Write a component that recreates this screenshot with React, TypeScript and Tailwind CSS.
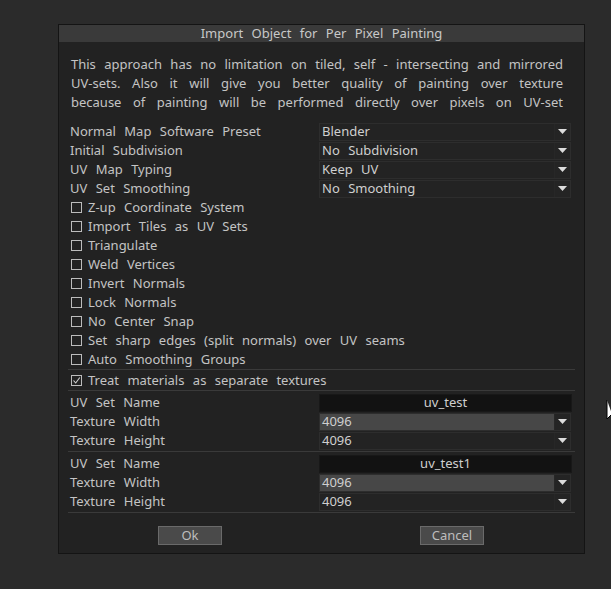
import React from "react";

const font = { fontFamily: '"Noto Sans", "DejaVu Sans", sans-serif' };

const Arrow = () => (
  <svg width="9" height="5" viewBox="0 0 9 5" className="block">
    <path d="M0 0 H9 L4.5 5 Z" fill="#dcdcdc" />
  </svg>
);

const Dropdown = ({ value, light }: { value: string; light?: boolean }) => (
  <div className="flex h-[18px] w-[252px] border border-[#2d2d2d] bg-[#232323]">
    <div
      className={`flex flex-1 items-center pl-[2px] text-[13px] leading-none text-[#cfcfcf] ${
        light ? "bg-[#474747]" : ""
      }`}
    >
      {value}
    </div>
    <div className="flex w-[16px] items-center justify-center border-l border-[#272727] bg-[#242424]">
      <Arrow />
    </div>
  </div>
);

const NameInput = ({ value }: { value: string }) => (
  <div className="flex h-[18px] w-[253px] items-center justify-center border border-[#181818] bg-[#121212] text-[13px] leading-none text-[#cfcfcf]">
    {value}
  </div>
);

const Row = ({ label, children }: { label: string; children: React.ReactNode }) => (
  <div className="flex h-[19px] items-center">
    <div className="w-[251px] pl-[2px] text-[13px] leading-none text-[#c4c4c4]">{label}</div>
    {children}
  </div>
);

const Check = ({ label, checked }: { label: string; checked?: boolean }) => (
  <div className="flex h-[19px] items-center pl-[3px] text-[13px] leading-none text-[#c4c4c4]">
    <div className="mr-[6px] flex h-[11px] w-[11px] items-center justify-center border border-[#bcbcbc]">
      {checked && (
        <svg width="9" height="9" viewBox="0 0 9 9">
          <path d="M1.5 4.5 L3.7 7 L7.8 1.5" stroke="#d0d0d0" strokeWidth="1.1" fill="none" />
        </svg>
      )}
    </div>
    {label}
  </div>
);

const Sep = () => <div className="h-[2px] border-t border-[#3a3a3a] border-b-[#1b1b1b]" />;

const UvBlock = ({ name }: { name: string }) => (
  <div className="py-[1px]">
    <Row label="UV Set Name">
      <NameInput value={name} />
    </Row>
    <Row label="Texture Width">
      <Dropdown value="4096" light />
    </Row>
    <Row label="Texture Height">
      <Dropdown value="4096" />
    </Row>
  </div>
);

export default function App() {
  const checks = [
    "Z-up Coordinate System",
    "Import Tiles as UV Sets",
    "Triangulate",
    "Weld Vertices",
    "Invert Normals",
    "Lock Normals",
    "No Center Snap",
    "Set sharp edges (split normals) over UV seams",
    "Auto Smoothing Groups",
  ];

  const lines = [
    "This approach has no limitation on tiled, self - intersecting and mirrored",
    "UV-sets. Also it will give you better quality of painting over texture",
    "because of painting will be performed directly over pixels on UV-set",
  ];

  return (
    <div
      className="relative h-[589px] w-[611px] overflow-hidden bg-[#2b2b2b] pt-[24px] pl-[58px]"
      style={{ ...font, wordSpacing: "5px" }}
    >
      <div className="w-[527px] border border-[#141414] bg-[#222222]">
        <div className="flex h-[17px] items-center justify-center bg-[#3a3a3a] text-[13px] leading-none text-[#c8c8c8]">
          Import Object for Per Pixel Painting
        </div>

        <div className="px-[9px] pt-[13px]">
          <div className="pl-[3px] pr-[12px] text-[13px] leading-[19px] text-[#c4c4c4]">
            {lines.map((l) => (
              <div key={l} className="text-justify [text-align-last:justify]" style={{ wordSpacing: "0px" }}>
                {l}
              </div>
            ))}
          </div>

          <div className="mt-[10px]">
            <Row label="Normal Map Software Preset">
              <Dropdown value="Blender" />
            </Row>
            <Row label="Initial Subdivision">
              <Dropdown value="No Subdivision" />
            </Row>
            <Row label="UV Map Typing">
              <Dropdown value="Keep UV" />
            </Row>
            <Row label="UV Set Smoothing">
              <Dropdown value="No Smoothing" />
            </Row>
            {checks.map((c) => (
              <Check key={c} label={c} />
            ))}
          </div>
          <Sep />
          <Check label="Treat materials as separate textures" checked />
          <Sep />
          <UvBlock name="uv_test" />
          <Sep />
          <UvBlock name="uv_test1" />
          <Sep />

          <div className="flex gap-[198px] pt-[12px] pb-[8px] pl-[90px]">
            <button className="h-[19px] w-[64px] border border-[#6a6a6a] bg-[#4a4a4a] text-[13px] leading-none text-[#bdbdbd]">
              Ok
            </button>
            <button className="h-[19px] w-[64px] border border-[#6a6a6a] bg-[#4a4a4a] text-[13px] leading-none text-[#bdbdbd]">
              Cancel
            </button>
          </div>
        </div>
      </div>

      <svg className="absolute left-[606px] top-[399px]" width="8" height="22" viewBox="0 0 8 22">
        <path d="M1 1 V20 L6 15" fill="#ffffff" stroke="#000000" strokeWidth="1" />
      </svg>
    </div>
  );
}
